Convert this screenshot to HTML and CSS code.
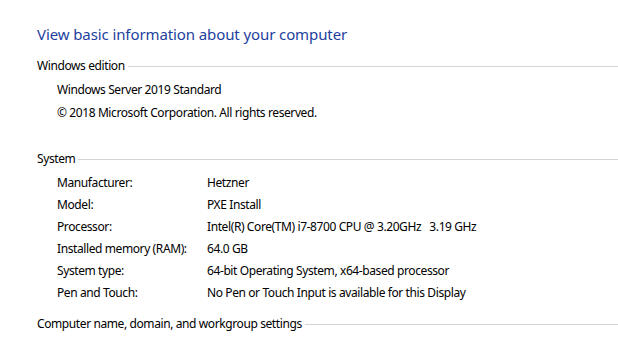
FILE: index.html
```html
<!DOCTYPE html>
<html lang="en">
<head>
  <meta charset="UTF-8">
  <meta name="viewport" content="width=device-width, initial-scale=1.0">
  <title>System</title>
  <link rel="stylesheet" href="styles.css">
</head>
<body>
  <div class="page">
    <h1>View basic information about your computer</h1>

    <div class="group-title">Windows edition</div>
    <div class="group edition">
      <div class="line">Windows Server 2019 Standard</div>
      <div class="line">&copy; 2018 Microsoft Corporation. All rights reserved.</div>
    </div>

    <div class="group-title">System</div>
    <div class="group system">
      <div class="row"><span class="label">Manufacturer:</span><span>Hetzner</span></div>
      <div class="row"><span class="label">Model:</span><span>PXE Install</span></div>
      <div class="row"><span class="label">Processor:</span><span>Intel(R) Core(TM) i7-8700 CPU @ 3.20GHz&nbsp;&nbsp; 3.19 GHz</span></div>
      <div class="row"><span class="label">Installed memory (RAM):</span><span>64.0 GB</span></div>
      <div class="row"><span class="label">System type:</span><span>64-bit Operating System, x64-based processor</span></div>
      <div class="row"><span class="label">Pen and Touch:</span><span>No Pen or Touch Input is available for this Display</span></div>
    </div>

    <div class="group-title">Computer name, domain, and workgroup settings</div>
  </div>
</body>
</html>
```

FILE: styles.css
```css
body {
  margin: 0;
  background-color: #fff;
  font-family: "Segoe UI", "Noto Sans", sans-serif;
  font-size: 12px;
  letter-spacing: -0.4px;
  color: #000;
}
.page {
  padding: 22px 0 0 37px;
}
h1 {
  margin: 0 0 8px;
  font-size: 15px;
  font-weight: normal;
  letter-spacing: -0.1px;
  color: #1e3f9e;
  line-height: 24px;
}
.group-title {
  display: flex;
  align-items: center;
  height: 22px;
}
.group-title::after {
  content: "";
  flex: 1;
  margin: 2px 0 0 3px;
  border-top: 1px solid #d5d5d5;
}
.group {
  padding-left: 20px;
}
.edition {
  padding-top: 2px;
  margin-bottom: 23px;
}
.line,
.row {
  height: 23px;
  line-height: 23px;
}
.system {
  padding-top: 3px;
  margin-bottom: 8px;
}
.system .row {
  display: flex;
  height: 22px;
  line-height: 22px;
}
.label {
  width: 150px;
}
```
